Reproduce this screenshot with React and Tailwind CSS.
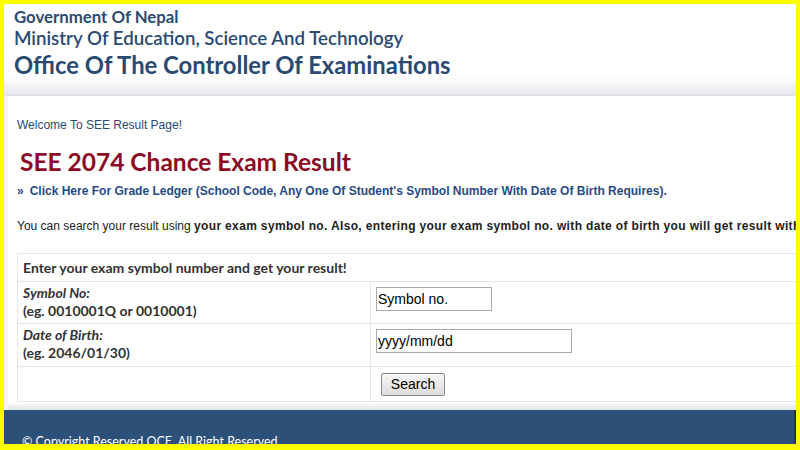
import React from 'react';

const heading = { fontFamily: 'Lato, "Open Sans", sans-serif' };

export default function App() {
  return (
    <div className="w-[800px] h-[450px] overflow-hidden bg-[#ffff00] p-[4px] pb-[6px]">
      <div className="h-full overflow-hidden bg-[#f3f3f3] flex flex-col">
        {/* Header */}
        <header
          className="h-[92px] shrink-0 bg-gradient-to-b from-white from-80% to-[#e6e7ea] border-b border-[#dcdde0] px-[10px] pt-[2px] text-[#2b4a72]"
          style={heading}
        >
          <div className="text-[16.8px] font-bold leading-[21px]">Government Of Nepal</div>
          <div className="text-[18.7px] font-semibold leading-[23px]">Ministry Of Education, Science And Technology</div>
          <div className="text-[23.8px] font-bold leading-[30px]">Office Of The Controller Of Examinations</div>
        </header>

        {/* Body */}
        <main className="flex-1 ml-[4px] bg-white pl-[9px] pt-[22px] overflow-hidden font-['Liberation_Sans',Arial,sans-serif]">
          <p className="text-[12px] text-[#2b4a72] leading-[14px]">Welcome To SEE Result Page!</p>
          <h1 className="mt-[15px] ml-[3px] text-[24.5px] font-bold leading-[30px] text-[#8c0a24]" style={heading}>
            SEE 2074 Chance Exam Result
          </h1>
          <a className="block mt-[7px] text-[12px] font-bold text-[#264a86] leading-[14px] whitespace-nowrap">
            <span className="mr-[6px]">»</span>Click Here For Grade Ledger (School Code, Any One Of Student's Symbol Number With Date Of Birth Requires).
          </a>
          <p className="mt-[21px] text-[12px] text-[#222] leading-[14px] whitespace-nowrap">
            You can search your result using <b className="tracking-[0.35px]">your exam symbol no. Also, entering your exam symbol no. with date of birth you will get result with marks.</b>
          </p>

          <table className="mt-[20px] w-[800px] border-collapse text-[14px] text-[#333]" style={heading}>
            <tbody>
              <tr className="h-[28px]">
                <td colSpan={2} className="border border-[#e6e6e6] px-[5px] font-bold">
                  Enter your exam symbol number and get your result!
                </td>
              </tr>
              <tr className="h-[42px]">
                <td className="w-[353px] border border-[#e6e6e6] px-[5px] pb-[2px] font-bold leading-[18px]">
                  <i>Symbol No:</i>
                  <br />
                  (eg. 0010001Q or 0010001)
                </td>
                <td className="border border-[#e6e6e6] px-[5px] pb-[8px]">
                  <input
                    defaultValue="Symbol no."
                    className="w-[116px] h-[24px] border border-[#a9a9a9] px-[1px] text-[14px] text-black font-['Liberation_Sans',Arial,sans-serif] outline-none"
                  />
                </td>
              </tr>
              <tr className="h-[43px]">
                <td className="border border-[#e6e6e6] px-[5px] pb-[2px] font-bold leading-[18px]">
                  <i>Date of Birth:</i>
                  <br />
                  (eg. 2046/01/30)
                </td>
                <td className="border border-[#e6e6e6] px-[5px] pb-[8px]">
                  <input
                    defaultValue="yyyy/mm/dd"
                    className="w-[196px] h-[24px] border border-[#a9a9a9] px-[1px] text-[14px] text-black font-['Liberation_Sans',Arial,sans-serif] outline-none"
                  />
                </td>
              </tr>
              <tr className="h-[35px]">
                <td className="border border-[#e6e6e6]"></td>
                <td className="border border-[#e6e6e6] px-[10px]">
                  <button className="w-[64px] h-[23px] rounded-[2px] border border-[#8a8a8a] bg-gradient-to-b from-[#f6f6f6] to-[#dddddd] text-[14px] text-black font-['Liberation_Sans',Arial,sans-serif]">
                    Search
                  </button>
                </td>
              </tr>
            </tbody>
          </table>
        </main>

        {/* Footer */}
        <div className="h-[8px] shrink-0 ml-[4px] bg-gradient-to-b from-white to-[#dfe4ea]"></div>
        <footer className="h-[34px] shrink-0 bg-[#2d5079] border-r-2 border-[#1f3552] pl-[18px] pt-[24px] text-white text-[12.5px] leading-[16px]" style={heading}>
          © Copyright Reserved OCE. All Right Reserved
        </footer>
      </div>
    </div>
  );
}
